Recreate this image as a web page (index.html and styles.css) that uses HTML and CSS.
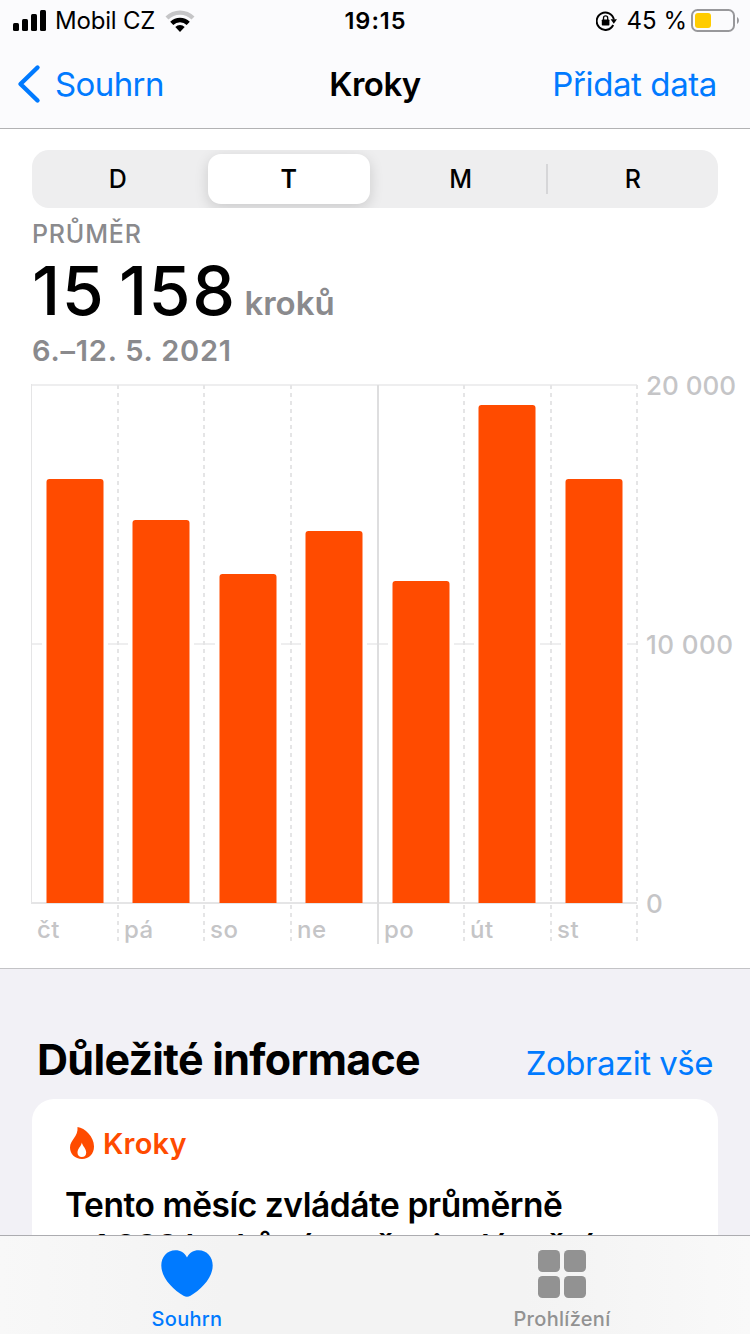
FILE: index.html
```html
<!DOCTYPE html>
<html lang="cs">
<head>
  <meta charset="UTF-8">
  <meta name="viewport" content="width=device-width, initial-scale=1.0">
  <title>Kroky</title>
  <link rel="stylesheet" href="styles.css">
</head>
<body>
  <div class="app">
    <header class="top">
      <div class="status-bar">
        <div class="status-left">
          <svg class="signal" width="34" height="22" viewBox="0 0 34 22">
            <rect x="0" y="13" width="6" height="8" rx="1.5"/>
            <rect x="9" y="9" width="6" height="12" rx="1.5"/>
            <rect x="18" y="4" width="6" height="17" rx="1.5"/>
            <rect x="27" y="0" width="6" height="21" rx="1.5"/>
          </svg>
          <span class="carrier">Mobil CZ</span>
          <svg class="wifi" width="30" height="22" viewBox="0 0 30 22">
            <path d="M0.5 6.5a20.5 20.5 0 0 1 29 0l-3 3.1a16.3 16.3 0 0 0-23 0z" fill="#c5c5c7"/>
            <path d="M5.2 11.7a14 14 0 0 1 19.6 0l-3.1 3.2a9.6 9.6 0 0 0-13.4 0z"/>
            <path d="M10.3 17a6.8 6.8 0 0 1 9.4 0L15 22z"/>
          </svg>
        </div>
        <span class="clock">19:15</span>
        <div class="status-right">
          <svg class="lock" width="21" height="20" viewBox="0 0 21 20">
            <path d="M17.2 14A8.7 8.7 0 1 1 17.9 8.5" fill="none" stroke="#000" stroke-width="1.9"/>
            <path d="M14.6 8.2h6.4l-3.2 4.6z"/>
            <rect x="5.8" y="8.4" width="7.6" height="6.200" rx="0.8"/>
            <path d="M7.5 9V7a2.1 2.1 0 0 1 4.2 0v2" fill="none" stroke="#000" stroke-width="1.3"/>
          </svg>
          <span class="percent">45 %</span>
          <svg class="battery" width="49" height="24" viewBox="0 0 49 24">
            <rect x="1" y="1" width="42" height="21" rx="5.5" fill="none" stroke="#98989b" stroke-width="2"/>
            <rect x="4" y="4" width="16" height="15" rx="3" fill="#ffcc00"/>
            <path d="M46 8c2.6 1.4 2.6 5.6 0 7z" fill="#98989b"/>
          </svg>
        </div>
      </div>
      <nav class="nav-bar">
        <a class="back">
          <svg width="24" height="40" viewBox="0 0 24 40"><path d="M20.5 3.5L3.5 20l17 16.5" fill="none" stroke="#007aff" stroke-width="4.4" stroke-linecap="round" stroke-linejoin="round"/></svg>
          <span class="back-label">Souhrn</span>
        </a>
        <h1 class="title">Kroky</h1>
        <a class="add">Přidat data</a>
      </nav>
    </header>

    <main>
      <section class="steps">
        <div class="segments">
          <span class="segment">D</span>
          <span class="segment active">T</span>
          <span class="segment">M</span>
          <span class="segment split">R</span>
        </div>
        <div class="summary-label">PRŮMĚR</div>
        <div class="summary-value"><span class="number">15 158</span><span class="unit">kroků</span></div>
        <div class="summary-date">6.–12. 5. 2021</div>

        <svg class="chart" width="750" height="572" viewBox="0 374 750 572">
          <g class="grid">
            <path class="light" d="M32 385H637M32 644H42M108 644H128M194 644H215M281 644H301M367 644H388M454 644H474M540 644H561M627 644H637"/>
            <path d="M32 903H637"/>
            <path class="thin" d="M31.5 384V904"/>
            <path class="dashed" d="M118 385V942M204 385V942M291 385V942M464 385V942M551 385V942M637 385V942"/>
            <path class="week" d="M378 385V944"/>
          </g>
          <g class="bars">
            <path d="M46.5 903V482q0-3 3-3h51q3 0 3 3v421z"/>
            <path d="M132.5 903V523q0-3 3-3h51q3 0 3 3v380z"/>
            <path d="M219.5 903V577q0-3 3-3h51q3 0 3 3v326z"/>
            <path d="M305.5 903V534q0-3 3-3h51q3 0 3 3v369z"/>
            <path d="M392.5 903V584q0-3 3-3h51q3 0 3 3v319z"/>
            <path d="M478.5 903V408q0-3 3-3h51q3 0 3 3v495z"/>
            <path d="M565.5 903V482q0-3 3-3h51q3 0 3 3v421z"/>
          </g>
          <g class="axis">
            <text x="646" y="395" textLength="90">20 000</text>
            <text x="646" y="654" textLength="87">10 000</text>
            <text x="646" y="913">0</text>
          </g>
          <g class="axis days">
            <text x="37" y="938">čt</text>
            <text x="124" y="938">pá</text>
            <text x="210" y="938">so</text>
            <text x="297" y="938">ne</text>
            <text x="384" y="938">po</text>
            <text x="470" y="938">út</text>
            <text x="557" y="938">st</text>
          </g>
        </svg>
      </section>

      <section class="highlights">
        <div class="section-head">
          <h2 class="section-title">Důležité informace</h2>
          <a class="show-all">Zobrazit vše</a>
        </div>
        <div class="card">
          <div class="card-head">
            <svg width="24" height="32" viewBox="0 0 24 32">
              <path fill-rule="evenodd" d="M7.5 0C15 1 24 9.5 24 19.5C24 27 19 32 12 32S0 27 0 20.5C0 13 8.5 9.5 7.5 0zM11.8 15.5C11.5 19 7.5 21.5 7.5 25.8C7.5 28.5 9.2 30 11.8 30S16.2 28.5 16.2 25.5C16.2 21.5 12.5 19 11.8 15.5z"/>
            </svg>
            <span class="card-title">Kroky</span>
          </div>
          <p class="card-text">Tento měsíc zvládáte průměrně<br>o 1 032 kroků víc než minulý měsíc.</p>
        </div>
      </section>
    </main>

    <footer class="tab-bar">
      <a class="tab active">
        <svg width="52" height="48" viewBox="0 0 52 48"><path d="M26 7.5C28.5 2.5 32.5 .2 37.5 .2C46 .2 51.7 7 51.7 15.5C51.7 28 40 39.5 29.5 45.7Q26 48 22.5 45.7C12 39.5 .3 28 .3 15.5C.3 7 6 .2 14.5 .2C19.5 .2 23.5 2.5 26 7.5z"/></svg>
        <span class="tab-label">Souhrn</span>
      </a>
      <a class="tab">
        <svg width="48" height="48" viewBox="0 0 48 48">
          <rect width="22" height="22" rx="4.5"/>
          <rect x="26" width="22" height="22" rx="4.5"/>
          <rect y="26" width="22" height="22" rx="4.5"/>
          <rect x="26" y="26" width="22" height="22" rx="4.5"/>
        </svg>
        <span class="tab-label">Prohlížení</span>
      </a>
    </footer>
  </div>
</body>
</html>
```
FILE: styles.css
```css
* {
  box-sizing: border-box;
}

body {
  margin: 0;
  background: #f2f1f6;
  color: #000;
  font-family: Inter, "Liberation Sans", sans-serif;
}

.app {
  width: 750px;
  height: 1334px;
  display: flex;
  flex-direction: column;
  overflow: hidden;
}

main {
  flex: 1;
  min-height: 0;
  overflow: hidden;
}

svg {
  display: block;
  flex: none;
}

.top {
  height: 129px;
  flex: none;
  background: #fbfbfd;
  border-bottom: 1px solid #b2b2b4;
}

.status-bar {
  height: 41px;
  padding: 0 10px 0 13px;
  display: grid;
  grid-template-columns: 1fr auto 1fr;
  align-items: center;
  font-size: 24px;
}

.status-left,
.status-right {
  display: flex;
  align-items: center;
}

.status-right {
  justify-content: flex-end;
}

.carrier {
  margin-left: 8px;
  letter-spacing: -0.2px;
}

.wifi {
  margin-left: 10px;
}

.clock {
  padding-right: 2px;
  font-size: 23.5px;
  font-weight: 600;
  letter-spacing: 1px;
}

.percent {
  margin: 0 4px 0 10px;
}

.nav-bar {
  height: 85px;
  padding: 0 17px;
  display: grid;
  grid-template-columns: 1fr auto 1fr;
  align-items: center;
  font-size: 33px;
  letter-spacing: -0.6px;
  color: #007aff;
}

.back {
  display: flex;
  align-items: center;
  gap: 14px;
}

.title {
  margin: 0;
  font-size: 33px;
  font-weight: 600;
  letter-spacing: -0.5px;
  color: #000;
}

.add {
  padding-right: 16px;
  text-align: right;
  letter-spacing: -0.4px;
}

.steps {
  height: 840px;
  background: #fff;
  border-bottom: 1px solid #c3c3c6;
  padding: 21px 32px 0;
}

.segments {
  height: 58px;
  display: grid;
  grid-template-columns: repeat(4, 1fr);
  align-items: center;
  background: #eeeeef;
  border-radius: 17px;
  overflow: hidden;
}

.segment {
  height: 50px;
  line-height: 50px;
  text-align: center;
  font-size: 25px;
  font-weight: 450;
}

.segment.active {
  margin: 0 5px 0 4px;
  background: #fff;
  border-radius: 13px;
  font-weight: 600;
  box-shadow: 0 4px 14px rgba(0, 0, 0, 0.15);
}

.segment.split {
  margin-left: -1px;
  padding-left: 2px;
  background: linear-gradient(#d6d6d8, #d6d6d8) left center / 2px 30px no-repeat;
}

.summary-label {
  margin-top: 10px;
  font-size: 25px;
  line-height: 32px;
  font-weight: 500;
  letter-spacing: 0.8px;
  color: #8a8a8d;
}

.summary-value {
  height: 81px;
  line-height: 81px;
  white-space: nowrap;
}

.number {
  font-size: 68px;
  font-weight: 500;
  letter-spacing: 1.5px;
  word-spacing: -6px;
}

.unit {
  margin-left: 8px;
  font-size: 33px;
  font-weight: 600;
  color: #8a8a8d;
}

.summary-date {
  height: 40px;
  line-height: 40px;
  font-size: 29px;
  font-weight: 600;
  letter-spacing: 0.8px;
  color: #8a8a8d;
}

.chart {
  margin: 3px -32px 0;
  overflow: visible;
}

.grid path {
  fill: none;
  stroke: #e5e5e6;
  stroke-width: 2;
}

.grid .light {
  stroke: #eeeeef;
}

.grid .thin {
  stroke-width: 1;
}

.grid .dashed {
  stroke-dasharray: 4 4;
}

.grid .week {
  stroke: #dededf;
}

.bars {
  fill: #ff4b00;
}

.axis {
  font-size: 26px;
  font-weight: 450;
  fill: #c5c5c7;
}

.days {
  font-size: 24px;
  font-weight: 500;
  letter-spacing: 0.5px;
}

.highlights {
  padding: 63px 32px 0;
}

.section-head {
  height: 67px;
  padding: 0 5px;
  display: flex;
  justify-content: space-between;
  align-items: baseline;
}

.section-title {
  margin: 0;
  font-size: 43px;
  line-height: 54px;
  font-weight: 700;
  letter-spacing: -0.7px;
}

.show-all {
  font-size: 33px;
  letter-spacing: -0.5px;
  color: #007aff;
}

.card {
  height: 300px;
  padding: 28px 33px;
  background: #fff;
  border-radius: 22px;
}

.card-head {
  height: 32px;
  padding-left: 5px;
  display: flex;
  align-items: center;
  gap: 9px;
  color: #ff4b00;
  fill: #ff4b00;
}

.card-title {
  font-size: 29px;
  font-weight: 600;
  letter-spacing: 0.2px;
}

.card-text {
  margin: 25px 0 0;
  font-size: 33.5px;
  line-height: 42px;
  font-weight: 600;
  letter-spacing: -0.45px;
  white-space: nowrap;
}

.tab-bar {
  height: 99px;
  flex: none;
  padding-top: 14px;
  display: grid;
  grid-template-columns: 374px 1fr;
  background: linear-gradient(90deg, #f8f8f8, #f3f3f3 30%, #f3f3f3 70%, #f9f9f9);
  border-top: 1px solid #acacb0;
}

.tab {
  display: flex;
  flex-direction: column;
  align-items: center;
  gap: 9px;
  color: #929292;
  fill: #929292;
}

.tab.active {
  color: #007aff;
  fill: #007aff;
}

.tab-label {
  font-size: 20px;
  line-height: 24px;
  font-weight: 450;
  letter-spacing: 0.3px;
}
```
